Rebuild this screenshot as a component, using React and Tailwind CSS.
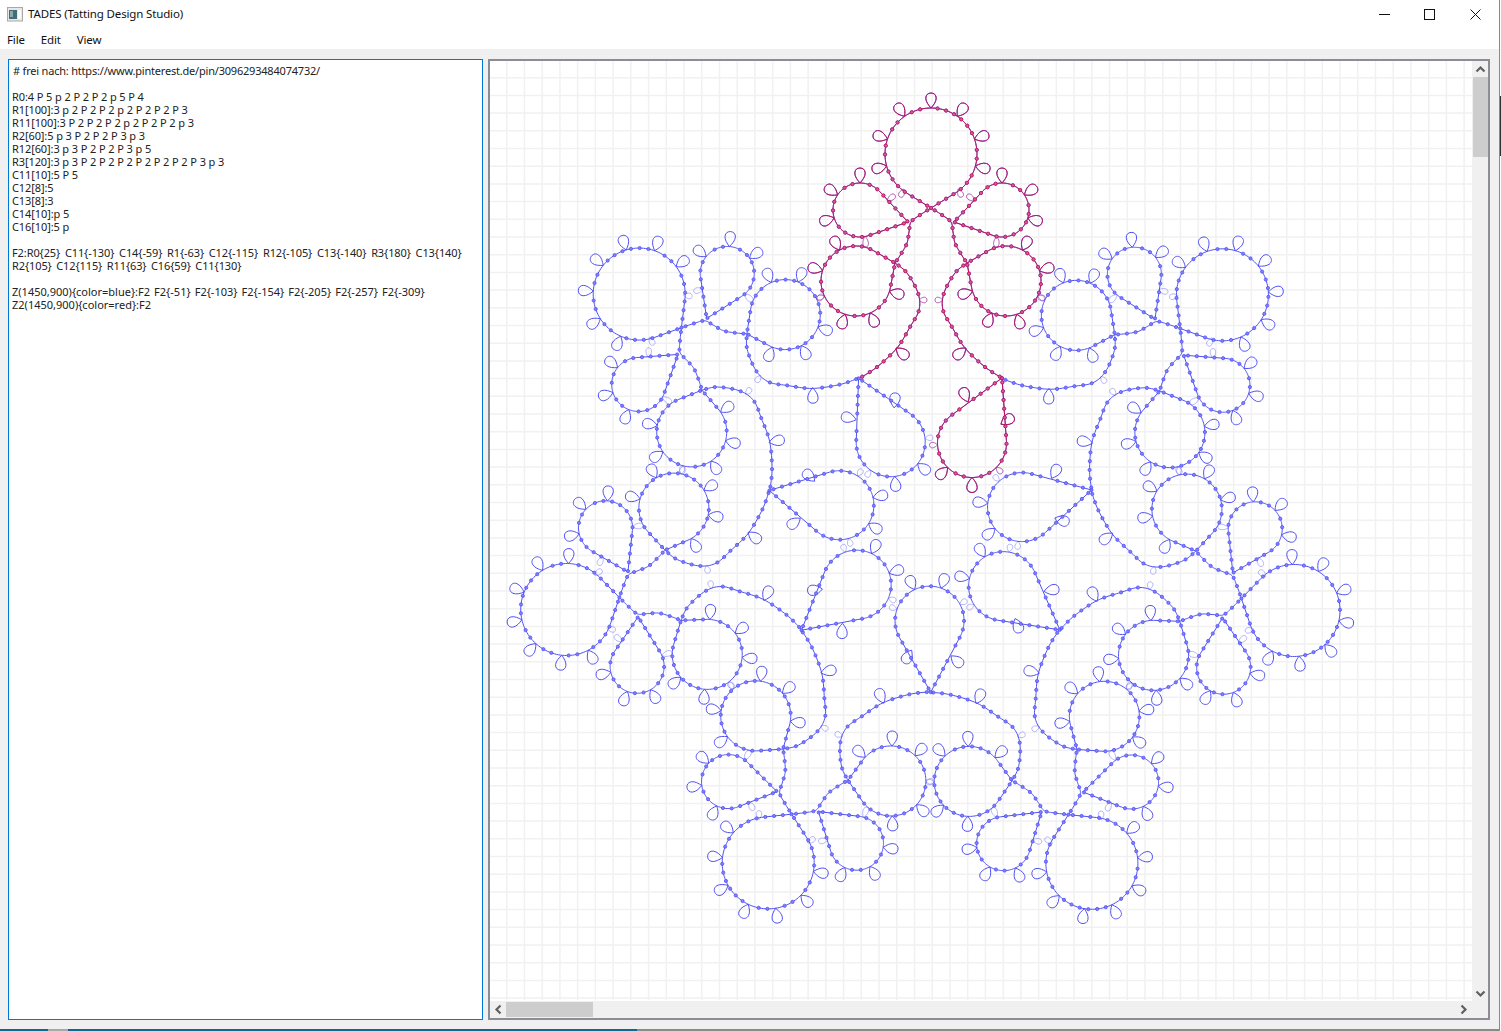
import React from "react";

const BASE = "tracking-[-0.1px]";
const LINES = [
  ["# frei nach: https://www.pinterest.de/pin/3096293484074732/", "tracking-[-0.2px] pl-[1px]"],
  ["", BASE],
  ["R0:4 P 5 p 2 P 2 P 2 p 5 P 4", BASE],
  ["R1[100]:3 p 2 P 2 P 2 p 2 P 2 P 2 P 3", BASE],
  ["R11[100]:3 P 2 P 2 P 2 p 2 P 2 P 2 p 3", BASE],
  ["R2[60]:5 p 3 P 2 P 2 P 3 p 3", BASE],
  ["R12[60]:3 p 3 P 2 P 2 P 3 p 5", BASE],
  ["R3[120]:3 p 3 P 2 P 2 P 2 P 2 P 2 P 2 P 3 p 3", BASE],
  ["C11[10]:5 P 5", BASE],
  ["C12[8]:5", BASE],
  ["C13[8]:3", BASE],
  ["C14[10]:p 5", BASE],
  ["C16[10]:5 p", BASE],
  ["", BASE],
  ["F2:R0{25} C11{-130} C14{-59} R1{-63} C12{-115} R12{-105} C13{-140} R3{180} C13{140}", "tracking-[-0.1px] [word-spacing:2px]"],
  ["R2{105} C12{115} R11{63} C16{59} C11{130}", "tracking-[-0.1px] [word-spacing:1.8px]"],
  ["", BASE],
  ["Z(1450,900){color=blue}:F2 F2{-51} F2{-103} F2{-154} F2{-205} F2{-257} F2{-309}", "tracking-[0px] [word-spacing:1.2px]"],
  ["Z2(1450,900){color=red}:F2", "tracking-[0px]"],
];

const rad = (a) => (a * Math.PI) / 180;

function ring(cx, cy, r, T, angles, pale = [], extra = []) {
  const dx = T[0] - cx;
  const dy = T[1] - cy;
  const dist = Math.hypot(dx, dy);
  const base = Math.atan2(dy, dx);
  const al = Math.acos(r / dist);
  const line = [T];
  const start = base + al;
  const end = base + 2 * Math.PI - al;
  for (let i = 0; i <= 120; i++) {
    const a = start + ((end - start) * i) / 120;
    line.push([cx + r * Math.cos(a), cy + r * Math.sin(a)]);
  }
  line.push(T);
  const pic = (a, len) => {
    const s = Math.sin(rad(a));
    const c = Math.cos(rad(a));
    return { b: [cx + r * s, cy - r * c], t: [cx + (r + len) * s, cy - (r + len) * c] };
  };
  return {
    line,
    picots: [...angles.map((a) => pic(a, 15)), ...extra],
    pale: pale.map((a) => pic(a, 8)),
  };
}

function chain(pts, picots = [], pale = []) {
  const out = [];
  const n = pts.length;
  for (let i = 0; i < n - 1; i++) {
    const p0 = pts[Math.max(i - 1, 0)];
    const p1 = pts[i];
    const p2 = pts[i + 1];
    const p3 = pts[Math.min(i + 2, n - 1)];
    for (let j = 0; j < 10; j++) {
      const t = j / 10;
      const f = (k) =>
        0.5 *
        (2 * p1[k] +
          (p2[k] - p0[k]) * t +
          (2 * p0[k] - 5 * p1[k] + 4 * p2[k] - p3[k]) * t * t +
          (3 * p1[k] - p0[k] - 3 * p2[k] + p3[k]) * t * t * t);
      out.push([f(0), f(1)]);
    }
  }
  out.push(pts[n - 1]);
  return { line: out, picots, pale };
}

const mx = (p) => [1862 - p[0], p[1]];
const mp = (o) => ({ b: mx(o.b), t: mx(o.t) });

const a1 = [[931, 208], [920, 215], [911, 222], [909, 232], [907, 243], [901, 254], [895, 263]];
const b1 = [[895, 263], [907, 273], [918, 293], [919, 310], [910, 327], [897, 348], [877, 367], [860, 378]];
const b1pic = [{ b: [896, 348], t: [908, 358] }];
const b1pale = [{ b: [919, 300], t: [927, 300] }];
const tailPale = [{ b: [904, 189], t: [900, 197] }];
const smallPale = [
  { b: [887, 201], t: [895, 195] },
  { b: [865, 236], t: [866, 247] },
];

const UNIT = [
  ring(931, 154, 46, [931, 208], [0, 35, -35, 71, -71, 105, -105]),
  { line: [], picots: [], pale: [...tailPale, ...tailPale.map(mp), ...smallPale, ...smallPale.map(mp)] },
  ring(860, 210, 27, [908, 222], [0, -56, -107]),
  ring(1002, 210, 27, [954, 222], [0, 56, 107]),
  ring(856, 281, 35, [895, 263], [-73, -28, 107, 156, -162], [-115]),
  ring(1006, 281, 35, [967, 263], [73, 28, -107, -156, 162], [115]),
  chain(a1),
  chain(a1.map(mx)),
  chain(b1, b1pic, b1pale),
  chain(b1.map(mx), b1pic.map(mp), b1pale.map(mp)),
  ring(972, 443, 34.5, [1002, 378], [-135, 180, 57], [135, -93], [{ b: [968, 402], t: [962, 388] }]),
];

const CX = 930.5;
const CY = 527;

function transform(k) {
  const th = rad((k * 360) / 7);
  const c = Math.cos(th);
  const s = Math.sin(th);
  return ([x, y]) => {
    const rx = x - CX;
    const ry = y - CY;
    return [CX + rx * c + ry * s, CY - rx * s + ry * c];
  };
}

const fx = (v) => v.toFixed(2);

function picotPath(b, t, hw) {
  const dx = t[0] - b[0];
  const dy = t[1] - b[1];
  const L = Math.hypot(dx, dy);
  const d = [dx / L, dy / L];
  const p = [-d[1], d[0]];
  const pt = (al, w) => {
    const q = [b[0] + d[0] * L * al + p[0] * w, b[1] + d[1] * L * al + p[1] * w];
    return `${fx(q[0])} ${fx(q[1])}`;
  };
  return (
    `M${pt(0, 0)}` +
    `C${pt(0.2, hw * 0.5)} ${pt(0.42, hw)} ${pt(0.66, hw)}` +
    `C${pt(0.88, hw)} ${pt(1, hw * 0.55)} ${pt(1, 0)}` +
    `C${pt(1, -hw * 0.55)} ${pt(0.88, -hw)} ${pt(0.66, -hw)}` +
    `C${pt(0.42, -hw)} ${pt(0.2, -hw * 0.5)} ${pt(0, 0)}Z`
  );
}

function build(k) {
  const tr = transform(k);
  let lines = "";
  let picots = "";
  let pale = "";
  let beads = "";
  UNIT.forEach((el) => {
    if (!el.line.length) {
      el.pale.forEach((q) => {
        pale += picotPath(tr(q.b), tr(q.t), 2.8);
      });
      return;
    }
    const pts = el.line.map(tr);
    lines += "M" + pts.map((q) => `${fx(q[0])} ${fx(q[1])}`).join("L");
    const bases = [...el.picots, ...el.pale].map((q) => tr(q.b));
    el.picots.forEach((q) => {
      picots += picotPath(tr(q.b), tr(q.t), 5.2);
    });
    el.pale.forEach((q) => {
      pale += picotPath(tr(q.b), tr(q.t), 2.8);
    });
    let next = 4.4;
    let walked = 0;
    for (let i = 1; i < pts.length; i++) {
      const a = pts[i - 1];
      const b = pts[i];
      const seg = Math.hypot(b[0] - a[0], b[1] - a[1]);
      while (walked + seg >= next) {
        const t = (next - walked) / seg;
        const x = a[0] + (b[0] - a[0]) * t;
        const y = a[1] + (b[1] - a[1]) * t;
        if (!bases.some((q) => Math.hypot(q[0] - x, q[1] - y) < 3.2)) {
          beads += `M${fx(x - 1.6)} ${fx(y)}a1.6 1.6 0 1 0 3.2 0a1.6 1.6 0 1 0 -3.2 0`;
        }
        next += 8.8;
      }
      walked += seg;
    }
  });
  return { lines, picots, pale, beads };
}

function Lace({ stroke, bead, k }) {
  const g = build(k);
  return (
    <g fill="none" stroke={stroke} strokeLinejoin="round">
      <path d={g.pale} strokeWidth="1" opacity="0.4" />
      <path d={g.picots} strokeWidth="1" />
      <path d={g.lines} strokeWidth="1" />
      <path d={g.beads} strokeWidth="0.8" fill={bead} />
    </g>
  );
}

const COPIES = [1, 2, 3, 4, 5, 6, 0];

function Canvas() {
  const vx = [];
  for (let x = 489 + 17.73; x < 1472; x += 17.73) vx.push(x);
  const hz = [];
  for (let y = 77.7; y < 1002; y += 17.7) hz.push(y);
  return (
    <svg className="block w-[982px] h-[941px]" viewBox="490 61 982 941">
      <g stroke="#f1f1f1" strokeWidth="1.5">
        {vx.map((x) => (
          <line key={x} x1={x} x2={x} y1="61" y2="1000" />
        ))}
        {hz.map((y) => (
          <line key={y} x1="490" x2="1472" y1={y} y2={y} />
        ))}
      </g>
      {COPIES.map((k) => (
        <Lace key={k} k={k} stroke="#5050f5" bead="#8080ff" />
      ))}
      <Lace k={0} stroke="#c0145a" bead="#d85c90" />
    </svg>
  );
}

function Chevron({ rot }) {
  return (
    <svg width="11" height="11" viewBox="0 0 11 11" style={{ transform: `rotate(${rot}deg)` }}>
      <path d="M1.5 7.5 L5.5 3.5 L9.5 7.5" fill="none" stroke="#606060" strokeWidth="2.2" />
    </svg>
  );
}

function AppIcon() {
  return (
    <svg width="16" height="15" viewBox="0 0 16 15">
      <rect x="0.5" y="0.5" width="15" height="13.5" fill="#e8e8e8" stroke="#a8a8a8" />
      <rect x="2" y="3" width="8" height="9" fill="#3f6f78" />
      <rect x="3" y="4" width="3" height="6" fill="#8fa8a8" />
      <rect x="11" y="3" width="3" height="9" fill="#fafafa" />
    </svg>
  );
}

export default function App() {
  return (
    <div className="flex w-[1501px] h-[1031px] overflow-hidden bg-white font-['Noto_Sans','Open_Sans',sans-serif] text-[#111]">
      <div className="w-[1499px] flex flex-col">
        <div className="h-[28px] flex items-center pl-[7px] bg-white shrink-0">
          <AppIcon />
          <span className="ml-[5px] text-[11.5px] tracking-[-0.15px]">TADES (Tatting Design Studio)</span>
          <div className="ml-auto flex items-center h-full">
            <svg width="11" height="11" viewBox="0 0 11 11" className="mr-[34px]">
              <line x1="0" x2="11" y1="5.5" y2="5.5" stroke="#111" />
            </svg>
            <svg width="11" height="11" viewBox="0 0 11 11" className="mr-[35px]">
              <rect x="0.5" y="0.5" width="10" height="10" fill="none" stroke="#111" />
            </svg>
            <svg width="11" height="11" viewBox="0 0 11 11" className="mr-[18px]">
              <path d="M0.5 0.5 L10.5 10.5 M10.5 0.5 L0.5 10.5" fill="none" stroke="#111" />
            </svg>
          </div>
        </div>
        <div className="h-[21px] flex items-center pl-[7px] pt-[3px] gap-[16px] text-[11.5px] tracking-[-0.15px] bg-white shrink-0">
          <span>File</span>
          <span>Edit</span>
          <span>View</span>
        </div>
        <div className="flex-1 min-h-0 bg-[#f0f0f0] flex gap-[5px] pl-[8px] pr-[9px] pt-[10px] pb-[9px]">
          <div className="w-[475px] border border-[#0078d7] bg-white pl-[3px] pt-[4px] text-[11px] leading-[13px] text-[#222] whitespace-pre">
            {LINES.map(([t, c], i) => (
              <div key={i} className={"h-[13px] " + c}>
                {t}
              </div>
            ))}
          </div>
          <div className="flex-1 border-2 border-[#8c8c94] bg-[#f0f0f0] flex flex-col min-w-0">
            <div className="flex flex-1 min-h-0">
              <div className="flex-1 bg-white">
                <Canvas />
              </div>
              <div className="w-[16px] flex flex-col items-center">
                <div className="h-[16px] flex items-center justify-center">
                  <Chevron rot={0} />
                </div>
                <div className="w-[15px] h-[80px] bg-[#cdcdcd]" />
                <div className="flex-1" />
                <div className="h-[16px] flex items-center justify-center">
                  <Chevron rot={180} />
                </div>
              </div>
            </div>
            <div className="h-[17px] flex items-center">
              <div className="w-[16px] flex justify-center">
                <Chevron rot={-90} />
              </div>
              <div className="h-[15px] w-[87px] bg-[#cdcdcd]" />
              <div className="flex-1" />
              <div className="w-[16px] mr-[17px] flex justify-center">
                <Chevron rot={90} />
              </div>
            </div>
          </div>
        </div>
        <div className="h-[2px] flex shrink-0 bg-[#8a8a8a]">
          <div className="w-[48px] bg-[#0a6a94]" />
          <div className="w-[20px] bg-[#a8a8a8]" />
          <div className="w-[569px] bg-[#0a6a94]" />
        </div>
      </div>
      <div className="w-[2px] flex flex-col border-l border-[#8a8a8a]">
        <div className="h-[96px]" />
        <div className="h-[60px] bg-[#303030]" />
        <div className="flex-1" />
      </div>
    </div>
  );
}
